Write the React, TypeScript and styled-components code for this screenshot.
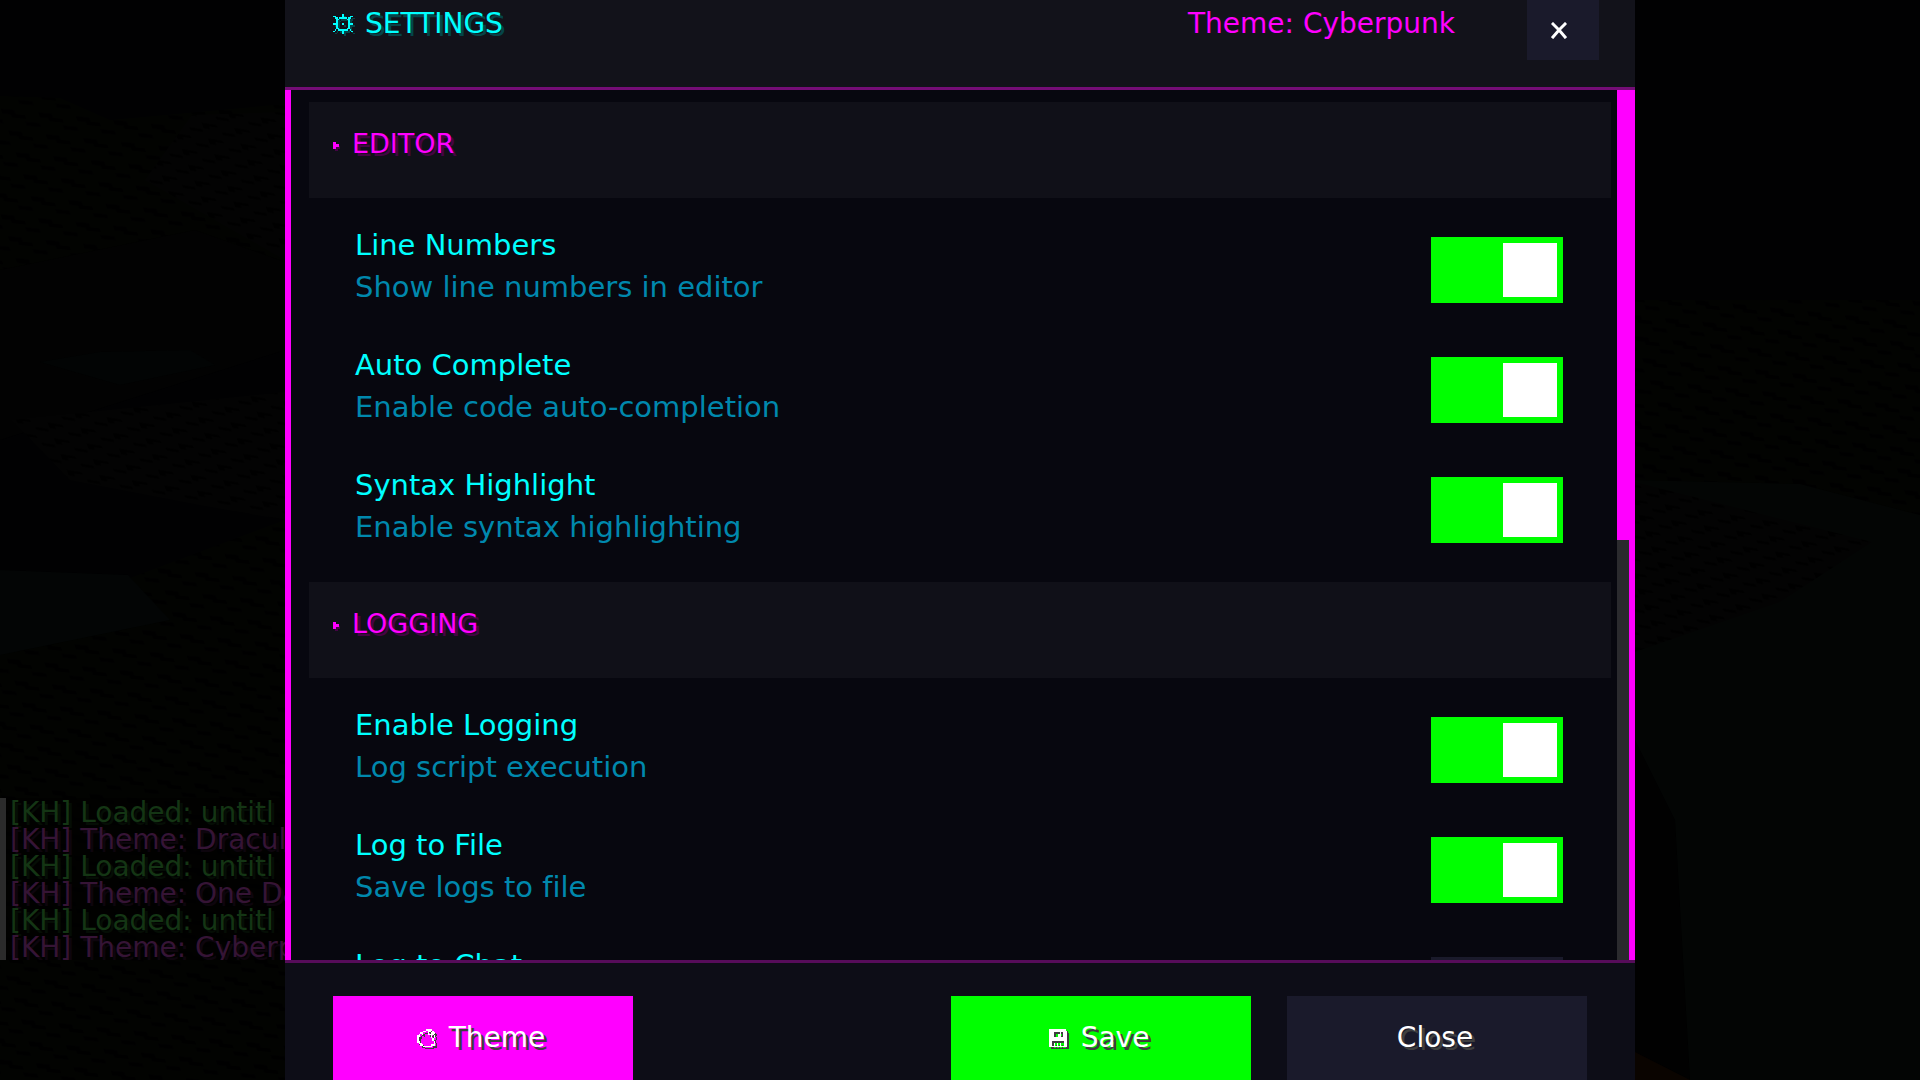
import React, { useState } from "react";
import styled, { createGlobalStyle } from "styled-components";

const GlobalStyle = createGlobalStyle`
  *, *::before, *::after { box-sizing: border-box; }
  html, body, #root { height: 100%; }
  body {
    margin: 0;
    overflow: hidden;
    background: #010101;
    font-family: "DejaVu Sans", sans-serif;
    font-size: 28px;
    line-height: 42px;
    font-variant-ligatures: none;
  }
  h1, h2, p, ul { margin: 0; padding: 0; font: inherit; }
  ul { list-style: none; }
  button { font: inherit; border: 0; cursor: pointer; }
`;

const Screen = styled.div`
  position: relative;
  display: grid;
  grid-template-columns: minmax(0, 1fr) minmax(0, 1350px) minmax(0, 1fr);
  height: 100vh;
  overflow: hidden;
`;

const Scenery = styled.svg`
  position: absolute;
  inset: 0;
  width: 100%;
  height: 100%;
`;

const ChatLog = styled.ul`
  position: relative;
  align-self: end;
  margin-bottom: 120px;
  padding-left: 4px;
  border-left: 6px solid #2b2b2b;
  background: rgba(0, 0, 0, 0.5);
  overflow: hidden;
`;

const ChatLine = styled.li<{ $kind: "loaded" | "theme" }>`
  height: 27px;
  line-height: 29px;
  white-space: nowrap;
  color: ${(p) => (p.$kind === "loaded" ? "#143514" : "#351435")};
  text-shadow: 3px 3px 0 ${(p) => (p.$kind === "loaded" ? "#050d05" : "#0d050d")};
`;

const Dialog = styled.main`
  position: relative;
  display: grid;
  grid-template-rows: 90px minmax(0, 1fr) 120px;
  min-width: 0;
  height: 100vh;
`;

const Header = styled.header`
  display: flex;
  align-items: flex-start;
  padding: 0 36px 0 48px;
  background: #12121a;
  border-bottom: 3px solid #740d76;
`;

const Title = styled.h1`
  display: flex;
  align-items: center;
  gap: 12px;
  flex: 1;
  padding-top: 3px;
  color: #00ffff;
  text-shadow: 3px 3px 0 #064448;
`;

const ThemeName = styled.p`
  padding: 3px 72px 0 0;
  color: #ff00ff;
`;

const CloseIconButton = styled.button`
  display: flex;
  align-items: center;
  justify-content: center;
  width: 72px;
  height: 60px;
  padding: 0 8px 0 0;
  background: #1a1a2b;
  color: #ffffff;
`;

const Content = styled.div`
  display: flex;
  min-height: 0;
  background: #07070f;
  border: solid #ff00ff;
  border-width: 0 6px;
`;

const Sections = styled.div`
  flex: 1;
  min-width: 0;
  overflow: hidden;
  padding: 12px 6px 0 18px;
`;

const ScrollTrack = styled.div`
  flex: none;
  width: 12px;
  background: #2a2a2e;
`;

const ScrollThumb = styled.div`
  height: calc(100% * 15 / 29);
  background: #ff00ff;
`;

const SectionHeader = styled.h2`
  display: flex;
  align-items: flex-start;
  gap: 12px;
  height: 96px;
  padding: 21px 24px;
  background: #101018;
  color: #ff00ff;
  font-size: 27px;
  text-shadow: 3px 3px 0 #440444;
`;

const Arrow = styled.svg`
  width: 7px;
  height: 42px;
`;

const Rows = styled.div`
  padding: 12px 0;
`;

const Row = styled.label`
  display: flex;
  align-items: center;
  justify-content: space-between;
  height: 120px;
  padding: 0 48px 0 46px;
  font-size: 29px;
  cursor: pointer;
`;

const RowText = styled.span`
  display: grid;
  padding-bottom: 8px;
`;

const RowTitle = styled.span`
  color: #00ffff;
`;

const RowHint = styled.span`
  color: #0088ad;
`;

const Toggle = styled.input`
  appearance: none;
  display: flex;
  flex: none;
  width: 132px;
  height: 66px;
  margin: 0;
  padding: 6px;
  background: #1a1a2b;
  cursor: pointer;

  &::before {
    content: "";
    width: 54px;
    height: 54px;
    background: #ffffff;
  }

  &:checked {
    justify-content: flex-end;
    background: #00ff00;
  }
`;

const Footer = styled.footer`
  display: flex;
  gap: 36px;
  padding: 33px 48px 0;
  background: #0d0d17;
  border-top: 3px solid #560c5a;
`;

const ActionButton = styled.button<{ $color: string; $first?: boolean }>`
  display: flex;
  align-items: flex-start;
  justify-content: center;
  gap: 12px;
  flex: 0 1 300px;
  margin-right: ${(p) => (p.$first ? "auto" : "0")};
  padding: 21px 4px 0 0;
  background: ${(p) => p.$color};
  color: #ffffff;
  text-shadow: 3px 3px 0 #3f3f3f;
`;

const IconSlot = styled.svg<{ $shade: string }>`
  flex: none;
  width: 20px;
  height: 20px;
  overflow: visible;
  filter: drop-shadow(2px 2px 0 ${(p) => p.$shade});
`;

const CrossIcon = styled.svg`
  width: 16px;
  height: 17px;
`;

const IconLine = styled.span`
  display: flex;
  align-items: center;
  height: 44px;
`;

const GEAR = [
  "......#......",
  "##....#....##",
  ".##.#####.##.",
  "..##.....##..",
  "..#.......#..",
  "..#.......#..",
  "###...#...###",
  "..#.......#..",
  "..#.......#..",
  "..##.....##..",
  ".#.#######.#.",
  "#.....#.....#",
  "......#......",
];

const PALETTE = [
  "......####...",
  "....##.##.#..",
  "..##...#.###.",
  ".#.#...####..",
  "##.......#.#.",
  "#........#.#.",
  "#.........#..",
  "#.........#..",
  "##.........#.",
  ".##........#.",
  "..##.....###.",
  "....######...",
];

const FLOPPY = [
  "###########..",
  "############.",
  "###....#.###.",
  "###...##.###.",
  "###...##.###.",
  "############.",
  "############.",
  "############.",
  "##........##.",
  "##.#.#.#..##.",
  "##.#.#.#..##.",
  "############.",
];

function PixelIcon({ art, shade = "transparent" }: { art: string[]; shade?: string }) {
  return (
    <IconSlot viewBox="0 0 13 13" $shade={shade} shapeRendering="crispEdges" aria-hidden="true">
      {art.flatMap((line, y) =>
        [...line].map((cell, x) =>
          cell === "#" ? <rect key={`${x}-${y}`} x={x} y={y} width="1" height="1" fill="currentColor" /> : null
        )
      )}
    </IconSlot>
  );
}

function Landscape() {
  return (
    <Scenery viewBox="0 0 1920 1080" preserveAspectRatio="none" aria-hidden="true">
      <defs>
        <pattern id="leaves" width="36" height="22" patternUnits="userSpaceOnUse" patternTransform="skewX(24) rotate(6)">
          <rect width="36" height="22" fill="#020301" />
          <path d="M0 3h13v4h9v4H8V8H0zM20 14h14v4H20z" fill="#000000" />
        </pattern>
        <pattern id="stone" width="30" height="16" patternUnits="userSpaceOnUse" patternTransform="skewX(30) rotate(10)">
          <rect width="30" height="16" fill="#030303" />
          <path d="M0 2h14v3H6v3H0zM16 9h12v3H16z" fill="#000000" />
        </pattern>
      </defs>
      <rect width="1920" height="1080" fill="#010102" />
      <path d="M0 96L60 98 110 120 285 104V270L0 270z" fill="url(#leaves)" />
      <path d="M192 115L285 112V260L145 180z" fill="url(#stone)" />
      <path d="M0 270L195 230 285 262V350L0 440z" fill="#020202" />
      <path d="M40 362L100 352 190 350 215 365 120 385z" fill="#020404" />
      <path d="M12 420L285 392V520L200 505 70 480z" fill="url(#stone)" />
      <path d="M0 640L130 578 285 520V1080H0z" fill="url(#leaves)" />
      <path d="M0 570L128 575 170 620 0 655z" fill="#030505" />
      <path d="M1635 300H1920V520L1635 480z" fill="url(#leaves)" />
      <path d="M1635 480L1800 484 1920 515V1080H1635z" fill="#030504" />
      <path d="M1635 482L1872 542 1780 602 1635 652z" fill="url(#stone)" />
      <path d="M1635 740L1675 820 1690 1080H1635z" fill="#010101" />
      <path d="M1635 1052L1690 1080H1635z" fill="#0a0400" />
    </Scenery>
  );
}

type ChatEntry = { kind: "loaded" | "theme"; text: string };

const CHAT: ChatEntry[] = [
  { kind: "loaded", text: "[KH] Loaded: untitl" },
  { kind: "theme", text: "[KH] Theme: Dracul" },
  { kind: "loaded", text: "[KH] Loaded: untitl" },
  { kind: "theme", text: "[KH] Theme: One Da" },
  { kind: "loaded", text: "[KH] Loaded: untitl" },
  { kind: "theme", text: "[KH] Theme: Cyberp" },
];

type Setting = { id: string; title: string; hint?: string; on: boolean };

const SECTIONS: { name: string; settings: Setting[] }[] = [
  {
    name: "EDITOR",
    settings: [
      { id: "lines", title: "Line Numbers", hint: "Show line numbers in editor", on: true },
      { id: "complete", title: "Auto Complete", hint: "Enable code auto-completion", on: true },
      { id: "syntax", title: "Syntax Highlight", hint: "Enable syntax highlighting", on: true },
    ],
  },
  {
    name: "LOGGING",
    settings: [
      { id: "logging", title: "Enable Logging", hint: "Log script execution", on: true },
      { id: "file", title: "Log to File", hint: "Save logs to file", on: true },
      { id: "chat", title: "Log to Chat", hint: "Show logs in chat", on: false },
    ],
  },
];

function SettingRow({ setting }: { setting: Setting }) {
  const [on, setOn] = useState(setting.on);
  return (
    <Row htmlFor={setting.id}>
      <RowText>
        <RowTitle>{setting.title}</RowTitle>
        <RowHint>{setting.hint}</RowHint>
      </RowText>
      <Toggle id={setting.id} type="checkbox" checked={on} onChange={(e) => setOn(e.target.checked)} />
    </Row>
  );
}

export default function App() {
  return (
    <>
      <GlobalStyle />
      <Screen>
        <Landscape />
        <ChatLog>
          {CHAT.map((line, i) => (
            <ChatLine key={i} $kind={line.kind}>
              {line.text}
            </ChatLine>
          ))}
        </ChatLog>
        <Dialog>
          <Header>
            <Title>
              <PixelIcon art={GEAR} shade="#064448" />
              SETTINGS
            </Title>
            <ThemeName>Theme: Cyberpunk</ThemeName>
            <CloseIconButton type="button" aria-label="Close settings">
              <CrossIcon viewBox="0 0 16 17" aria-hidden="true">
                <path
                  d="M2 2L8 8M8 8L14 2M8 8L2 15M8 8L14 15"
                  fill="none"
                  stroke="currentColor"
                  strokeWidth="3"
                  strokeLinecap="square"
                />
              </CrossIcon>
            </CloseIconButton>
          </Header>
          <Content>
            <Sections>
              {SECTIONS.map((section) => (
                <section key={section.name}>
                  <SectionHeader>
                    <Arrow viewBox="0 0 7 42" shapeRendering="crispEdges" aria-hidden="true">
                      <path d="M2 21h3v2h2v3H5v2H2z" fill="#440444" />
                      <path d="M0 19h3v2h3v3H3v2H0z" fill="#ff00ff" />
                    </Arrow>
                    {section.name}
                  </SectionHeader>
                  <Rows>
                    {section.settings.map((setting) => (
                      <SettingRow key={setting.id} setting={setting} />
                    ))}
                  </Rows>
                </section>
              ))}
            </Sections>
            <ScrollTrack>
              <ScrollThumb />
            </ScrollTrack>
          </Content>
          <Footer>
            <ActionButton type="button" $color="#ff00ff" $first>
              <IconLine>
                <PixelIcon art={PALETTE} shade="#3f3f3f" />
              </IconLine>
              Theme
            </ActionButton>
            <ActionButton type="button" $color="#00ff00">
              <IconLine>
                <PixelIcon art={FLOPPY} shade="#3f3f3f" />
              </IconLine>
              Save
            </ActionButton>
            <ActionButton type="button" $color="#1a1a2b">
              Close
            </ActionButton>
          </Footer>
        </Dialog>
      </Screen>
    </>
  );
}
